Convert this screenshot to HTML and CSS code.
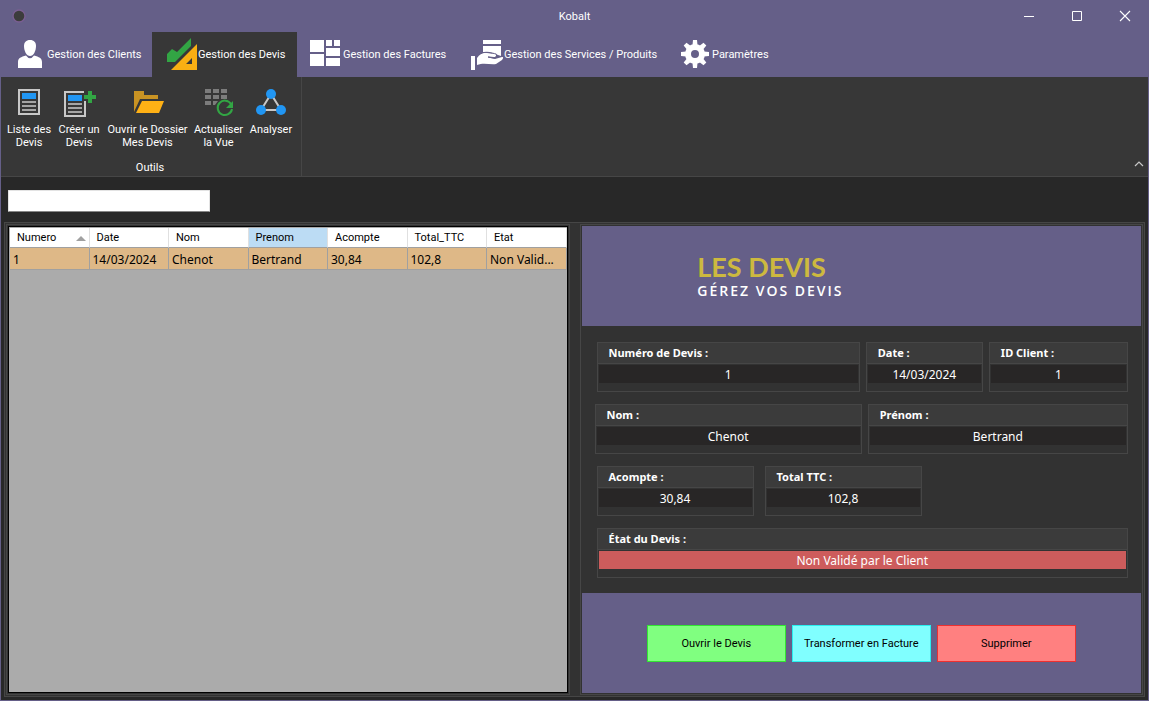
FILE: index.html
```html
<!DOCTYPE html>
<html lang="fr">
<head>
<meta charset="utf-8">
<title>Kobalt</title>
<link rel="stylesheet" href="styles.css">
</head>
<body>
<div class="window">
  <header class="titlebar">
    <svg class="app-icon" width="14" height="14" viewBox="0 0 14 14"><circle cx="7" cy="7" r="6" fill="#3c3c3c" stroke="#7a5f92" stroke-width="1.4"/></svg>
    <h1 class="title">Kobalt</h1>
    <div class="window-controls">
      <button type="button" aria-label="Réduire"><svg width="10" height="10" viewBox="0 0 10 10"><path d="M0 5.5H10" stroke="#fff"/></svg></button>
      <button type="button" aria-label="Agrandir"><svg width="10" height="10" viewBox="0 0 10 10"><path d="M.5 .5H9.5V9.5H.5Z" stroke="#fff" fill="none"/></svg></button>
      <button type="button" aria-label="Fermer"><svg width="10" height="10" viewBox="0 0 10 10"><path d="M0 0L10 10M10 0L0 10" stroke="#fff" stroke-width="1.1"/></svg></button>
    </div>
  </header>

  <nav class="tabs">
    <button type="button" class="tab tab-clients">
      <svg width="32" height="32" viewBox="0 0 32 32" fill="#fff"><path d="M15 2C19 2 21 4.500 21 8C21 13 18.500 18 15 18S9 13 9 8C9 4.500 11 2 15 2Z"/><path d="M11 17.500Q15 23 19 17.500C24 19 27 20 27 24V30H3V24C3 20 6 19 11 17.500Z"/></svg>
      <span>Gestion des Clients</span>
    </button>
    <button type="button" class="tab tab-devis active">
      <svg width="32" height="32" viewBox="0 0 32 32"><path d="M1 16L6 11L11 14L25 0V8L9 24H1Z" fill="#32a544"/><path d="M31 6V32H5ZM26 20L20 26H26Z" fill="#f9af13" fill-rule="evenodd"/></svg>
      <span>Gestion des Devis</span>
    </button>
    <button type="button" class="tab tab-factures">
      <svg width="32" height="32" viewBox="0 0 32 32" fill="#fff"><path d="M-1 2H13V14H-1ZM-1 16H13V28H-1ZM15 2H21V8H15ZM23 2H29V8H23ZM15 10H29V18H15ZM15 20H29V28H15Z"/></svg>
      <span>Gestion des Factures</span>
    </button>
    <button type="button" class="tab tab-services">
      <svg width="32" height="32" viewBox="0 0 32 32" fill="#fff"><path d="M11 2H29V6H11ZM11 8H29V18L17 14H11ZM-1 18H3V32H-1ZM5 27V20C8 16 11 14 15 15L23 16C25 17 24 19 22 19L16 18.500V19.500L23 21L30 19C32 19 31 21 30 22L24 26C18 27 12 24 5 27Z"/><path d="M9 15.500C14 13 20 15 24 16C26 17 25 20 22 20L16 19" fill="none" stroke="#655f88"/></svg>
      <span>Gestion des Services / Produits</span>
    </button>
    <button type="button" class="tab tab-params">
      <svg width="32" height="32" viewBox="0 0 32 32"><g fill="#fff"><path id="tooth" d="M12.500 7L13 2H17L17.500 7Z"/><use href="#tooth" transform="rotate(45 15 16)"/><use href="#tooth" transform="rotate(90 15 16)"/><use href="#tooth" transform="rotate(135 15 16)"/><use href="#tooth" transform="rotate(180 15 16)"/><use href="#tooth" transform="rotate(225 15 16)"/><use href="#tooth" transform="rotate(270 15 16)"/><use href="#tooth" transform="rotate(315 15 16)"/></g><circle cx="15" cy="16" r="7" fill="none" stroke="#fff" stroke-width="6"/></svg>
      <span>Paramètres</span>
    </button>
  </nav>

  <section class="ribbon">
    <div class="group">
      <div class="tools">
        <button type="button" class="tool">
          <svg width="32" height="32" viewBox="0 0 32 32"><path d="M6 4H26V28H6Z" fill="none" stroke="#c8c8c8" stroke-width="2"/><path d="M9 7H23V13H9Z" fill="#2196f3"/><path d="M9 16H23M9 20H23M9 24H23" stroke="#a5a5a5" stroke-width="2"/></svg>
          <span>Liste des Devis</span>
        </button>
        <button type="button" class="tool">
          <svg width="32" height="32" viewBox="0 0 32 32"><path d="M21 6H2V30H22V15" fill="none" stroke="#c8c8c8" stroke-width="2"/><path d="M5 9H19V15H5Z" fill="#2196f3"/><path d="M5 18H19M5 22H19M5 26H19" stroke="#a5a5a5" stroke-width="2"/><path d="M21 11H33M27 5V17" stroke="#32a544" stroke-width="4"/></svg>
          <span>Créer un Devis</span>
        </button>
        <button type="button" class="tool tool-wide">
          <svg width="32" height="32" viewBox="0 0 32 32"><path d="M2 5H12V9H26V13H8L2 26Z" fill="#c99323"/><path d="M10 15H32L27 27H4Z" fill="#ffb115"/></svg>
          <span>Ouvrir le Dossier<br>Mes Devis</span>
        </button>
        <button type="button" class="tool tool-medium">
          <svg width="32" height="32" viewBox="0 0 32 32"><path d="M2 3H8V7H2ZM10 3H16V7H10ZM18 3H24V7H18ZM2 9H8V13H2ZM10 9H16V13H10ZM18 9H24V13H18ZM2 15H8V19H2ZM10 15H15L12 19H10Z" fill="#7c7c7c"/><path d="M28 18A7.200 7.200 0 1 0 29 23" fill="none" stroke="#32a544" stroke-width="2"/><path d="M30 15V22H23Z" fill="#32a544"/></svg>
          <span>Actualiser la Vue</span>
        </button>
        <button type="button" class="tool">
          <svg width="32" height="32" viewBox="0 0 32 32"><path d="M16 8L6 24H26Z" fill="none" stroke="#c8c8c8" stroke-width="2"/><circle cx="16" cy="8" r="5" fill="#2196f3"/><circle cx="6" cy="24" r="5" fill="#2196f3"/><circle cx="26" cy="24" r="5" fill="#2196f3"/></svg>
          <span>Analyser</span>
        </button>
      </div>
      <div class="group-name">Outils</div>
    </div>
    <button type="button" class="collapse" aria-label="Réduire le ruban"><svg width="10" height="6" viewBox="0 0 10 6"><path d="M1 5L5 1L9 5" fill="none" stroke="#c8c8c8" stroke-width="1.200"/></svg></button>
  </section>

  <div class="searchbar"><input type="text" class="search" aria-label="Rechercher"></div>

  <main class="content">
    <section class="panel">
      <div class="grid">
        <table>
          <thead>
            <tr><th class="sorted">Numero</th><th>Date</th><th>Nom</th><th class="hot">Prenom</th><th>Acompte</th><th>Total_TTC</th><th>Etat</th></tr>
          </thead>
          <tbody>
            <tr><td>1</td><td>14/03/2024</td><td>Chenot</td><td>Bertrand</td><td>30,84</td><td>102,8</td><td>Non Valid...</td></tr>
          </tbody>
        </table>
      </div>
    </section>

    <section class="panel detail">
      <div class="banner">
        <div class="heading">
          <h2>LES DEVIS</h2>
          <p>GÉREZ VOS DEVIS</p>
        </div>
      </div>
      <div class="form">
        <div class="row">
          <div class="field field-number"><h3>Numéro de Devis :</h3><p>1</p></div>
          <div class="field field-date"><h3>Date :</h3><p>14/03/2024</p></div>
          <div class="field field-id"><h3>ID Client :</h3><p>1</p></div>
        </div>
        <div class="row row-names">
          <div class="field field-name"><h3>Nom :</h3><p>Chenot</p></div>
          <div class="field field-first"><h3>Prénom :</h3><p>Bertrand</p></div>
        </div>
        <div class="row row-amounts">
          <div class="field"><h3>Acompte :</h3><p>30,84</p></div>
          <div class="field"><h3>Total TTC :</h3><p>102,8</p></div>
        </div>
        <div class="row">
          <div class="field field-state"><h3>État du Devis :</h3><p class="rejected">Non Validé par le Client</p></div>
        </div>
      </div>
      <div class="actions">
        <button type="button" class="action open">Ouvrir le Devis</button>
        <button type="button" class="action convert">Transformer en Facture</button>
        <button type="button" class="action delete">Supprimer</button>
      </div>
    </section>
  </main>
</div>
</body>
</html>
```
FILE: styles.css
```css
* { box-sizing: border-box; }

body {
  margin: 0;
  background: #655f88;
  color: #fff;
  font: 11px/13px Roboto, "Open Sans", sans-serif;
}

h1, h2, h3, p { margin: 0; font: inherit; }

button {
  margin: 0;
  padding: 0;
  border: 0;
  background: none;
  color: inherit;
  font: inherit;
}

svg { display: block; flex: none; overflow: visible; }

.window {
  display: flex;
  flex-direction: column;
  min-height: 100vh;
  border: solid #655f88;
  border-width: 0 1px 1px;
  background: #282828;
}

.titlebar {
  display: grid;
  grid-template-columns: 1fr auto 1fr;
  align-items: center;
  height: 32px;
  margin: 0 -1px;
  background: #655f88;
}
.app-icon { margin-left: 12px; }
.window-controls { display: flex; justify-content: flex-end; }
.window-controls button {
  display: grid;
  place-items: center;
  width: 48px;
  height: 32px;
}

.tabs { display: flex; height: 45px; background: #655f88; }
.tab {
  display: flex;
  align-items: center;
  padding: 0 0 0 14px;
  white-space: nowrap;
}
.tab svg { margin-bottom: 1px; }
.tab.active { background: #373737; }
.tab-clients { width: 151px; }
.tab-devis { width: 145px; }
.tab-factures { width: 161px; }
.tab-services { width: 208px; }
.tab-params { width: 115px; }

.ribbon {
  display: flex;
  justify-content: space-between;
  align-items: flex-end;
  height: 100px;
  border-bottom: 1px solid #464646;
  background: #373737;
}
.group {
  display: flex;
  flex-direction: column;
  justify-content: space-between;
  height: 100%;
  padding: 9px 5px 2px 3px;
  border-right: 1px solid #464646;
}
.tools { display: flex; }
.tool {
  display: flex;
  flex-direction: column;
  align-items: center;
  gap: 5px;
  width: 50px;
}
.tool-wide { width: 87px; white-space: nowrap; }
.tool-medium { width: 55px; }
.group-name { text-align: center; }
.collapse { padding: 9px 4px; }

.searchbar { padding: 13px 7px 10px; }
.search {
  display: block;
  width: 202px;
  height: 22px;
  padding: 2px 4px;
  border: 1px solid #e3e3e3;
  border-bottom-color: #868686;
  border-radius: 1px;
  background: #fff;
  font: inherit;
}

.content {
  display: flex;
  flex: 1;
  gap: 10px;
  margin: 0 3px 3px;
  padding: 1px;
  border: 1px solid #464646;
  background: #323232;
}
.panel {
  display: flex;
  flex: 1 1 0;
  flex-direction: column;
  min-width: 0;
  padding: 1px;
  border: 1px solid #464646;
}

.grid {
  flex: 1;
  padding: 1px 0 0 1px;
  border: 1px solid #000;
  background: #ababab;
}
table {
  width: 100%;
  table-layout: fixed;
  border-collapse: separate;
  border-spacing: 0;
  color: #000;
}
th {
  height: 20px;
  padding: 0 0 0 7px;
  border-right: 1px solid #e0e0e0;
  border-bottom: 1px solid #a0a0a0;
  background: #fff;
  font-weight: 400;
  text-align: left;
}
th.hot { background: #bcdcf4; }
th.sorted::after {
  content: "";
  float: right;
  margin: 5px 3px 0 0;
  border: solid transparent;
  border-width: 0 5px 5px;
  border-bottom-color: #a0a0a0;
}
td {
  height: 22px;
  padding: 1px 0 0 3px;
  border-right: 1px solid #a0a0a0;
  border-bottom: 1px solid #a0a0a0;
  background: #deb887;
  font-family: "Noto Sans", sans-serif;
  font-size: 12px;
  white-space: nowrap;
}

.banner {
  display: grid;
  place-items: center;
  height: 100px;
  background: #655f88;
}
.heading { width: 328px; padding-top: 1px; }
.heading h2 {
  color: #cdb93f;
  font: 700 27px/28px Lato, sans-serif;
}
.heading p {
  font: 600 14px/20px "Open Sans", sans-serif;
  letter-spacing: 2px;
}

.form {
  display: flex;
  flex: 1;
  flex-direction: column;
  gap: 12px;
  padding: 16px 13px 15px;
}
.row { display: flex; gap: 6px; padding-left: 2px; }
.row-names { padding-left: 0; }
.row-amounts { gap: 11px; }
.field {
  height: 50px;
  border: 1px solid #464646;
  font: 12px/20px "Noto Sans", sans-serif;
}
.field h3 {
  height: 21px;
  padding-left: 11px;
  border-bottom: 1px solid #464646;
  background: #3b3b3b;
  font-size: 11px;
  font-weight: 700;
}
.field p {
  height: 18px;
  margin: 1px;
  background: #282626;
  text-align: center;
}
.field p.rejected { background: #cd5c5c; }
.field-number { flex: 261 1 0; }
.field-date { flex: 115 1 0; }
.field-id { flex: 137 1 0; }
.field-name { flex: 265 1 0; }
.field-first { flex: 258 1 0; }
.field-state { flex: 1; }
.row-amounts .field { width: 157px; }

.actions {
  display: flex;
  align-items: center;
  justify-content: center;
  gap: 6px;
  height: 100px;
  background: #655f88;
}
.action {
  width: 139px;
  height: 37px;
  border: 1px solid;
  color: #000;
}
.open { border-color: #32e632; background: #80ff80; }
.convert { border-color: #28f0f0; background: #80ffff; }
.delete { border-color: #ee3030; background: #ff8080; }
```
